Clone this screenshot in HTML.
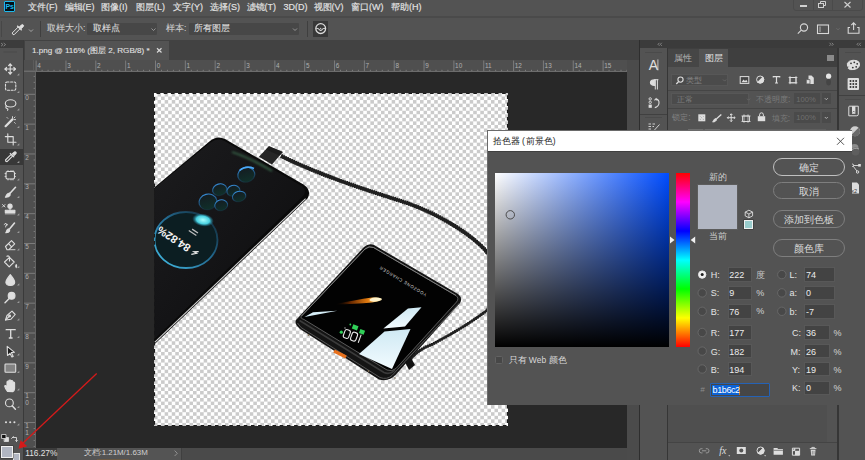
<!DOCTYPE html>
<html><head><meta charset="utf-8">
<style>
*{margin:0;padding:0;box-sizing:border-box}
html,body{width:865px;height:460px;overflow:hidden;background:#535353;font-family:"Liberation Sans",sans-serif;color:#d8d8d8}
.a{position:absolute}
.t{position:absolute;white-space:nowrap;line-height:1}
svg{position:absolute;overflow:visible}
</style></head><body>
<!-- MENU BAR -->
<div class="a" style="left:0;top:0;width:865px;height:17px;background:#535353"></div>
<div class="a" style="left:0;top:16px;width:865px;height:2px;background:#4a4a4a"></div>
<!-- OPTIONS BAR -->
<div class="a" style="left:0;top:18px;width:865px;height:22px;background:#535353"></div>
<!-- TAB BAR -->
<div class="a" style="left:0;top:40px;width:865px;height:20px;background:#424242"></div>

<!-- PS LOGO -->
<div class="a" style="left:3.6px;top:0.8px;width:11.6px;height:11px;background:#021018;border:1.1px solid #1cb8ec;border-radius:1px"></div>
<div class="t" style="left:5.6px;top:2.9px;font-size:7px;font-weight:bold;color:#1cb8ec;letter-spacing:-0.2px">Ps</div>
<!-- MENU ITEMS -->
<div class="t" style="left:28px;top:3.2px;font-size:9px;color:#e4e4e4;-webkit-text-stroke:0.15px #e4e4e4">文件(F)</div>
<div class="t" style="left:64.5px;top:3.2px;font-size:9px;color:#e4e4e4;-webkit-text-stroke:0.15px #e4e4e4">编辑(E)</div>
<div class="t" style="left:101px;top:3.2px;font-size:9px;color:#e4e4e4;-webkit-text-stroke:0.15px #e4e4e4">图像(I)</div>
<div class="t" style="left:136px;top:3.2px;font-size:9px;color:#e4e4e4;-webkit-text-stroke:0.15px #e4e4e4">图层(L)</div>
<div class="t" style="left:173px;top:3.2px;font-size:9px;color:#e4e4e4;-webkit-text-stroke:0.15px #e4e4e4">文字(Y)</div>
<div class="t" style="left:210px;top:3.2px;font-size:9px;color:#e4e4e4;-webkit-text-stroke:0.15px #e4e4e4">选择(S)</div>
<div class="t" style="left:246.5px;top:3.2px;font-size:9px;color:#e4e4e4;-webkit-text-stroke:0.15px #e4e4e4">滤镜(T)</div>
<div class="t" style="left:283.5px;top:3.2px;font-size:9px;color:#e4e4e4;-webkit-text-stroke:0.15px #e4e4e4">3D(D)</div>
<div class="t" style="left:313.5px;top:3.2px;font-size:9px;color:#e4e4e4;-webkit-text-stroke:0.15px #e4e4e4">视图(V)</div>
<div class="t" style="left:351px;top:3.2px;font-size:9px;color:#e4e4e4;-webkit-text-stroke:0.15px #e4e4e4">窗口(W)</div>
<div class="t" style="left:391px;top:3.2px;font-size:9px;color:#e4e4e4;-webkit-text-stroke:0.15px #e4e4e4">帮助(H)</div>
<!-- WINDOW CONTROLS -->
<div class="a" style="left:793px;top:-3px;width:70px;height:14px;border:1px solid #4a4a4a;border-radius:3px"></div>
<div class="a" style="left:813px;top:0;width:1px;height:10px;background:#4a4a4a"></div>
<div class="a" style="left:832px;top:0;width:1px;height:10px;background:#4a4a4a"></div>
<div class="a" style="left:799.5px;top:5px;width:7.5px;height:2px;background:#d0d0d0"></div>
<svg style="left:0;top:0" width="865" height="20"><g fill="none" stroke="#d0d0d0" stroke-width="1">
<rect x="818.5" y="3.5" width="5" height="4"/><path d="M820.5 3.5V1.5H825.5V5.5H823.5"/>
<path d="M844.5 2L850.5 7.5M850.5 2L844.5 7.5" stroke-width="1.1"/></g></svg>
<!-- OPTIONS BAR -->
<div class="a" style="left:1px;top:21px;width:1px;height:16px;background:#474747"></div>
<svg style="left:0;top:0" width="865" height="40"><g fill="none" stroke="#e0e0e0" stroke-width="1.1">
<path d="M12.8 34.3L12.2 33L18.3 26.9L20.1 28.7L14 34.8Z" stroke-width="1"/>
<path d="M17.2 25.8L21.7 30.3" stroke-width="1.3"/>
<path d="M19.3 27L21.3 25Q22.3 24 23.2 24.9Q24.1 25.8 23.1 26.8L21.1 28.8Z" fill="#e0e0e0" stroke-width="0.9"/>
<path d="M29 29.5L31 31.5L33 29.5" stroke="#b8b8b8" stroke-width="0.8"/>
</g></svg>
<div class="a" style="left:39.5px;top:21px;width:1px;height:16px;background:#3f3f3f"></div>
<div class="t" style="left:47px;top:24.3px;font-size:8.6px;color:#cdcdcd;-webkit-text-stroke:0.1px #cdcdcd">取样大小:</div>
<div class="a" style="left:87px;top:23px;width:70px;height:11.5px;background:#474747;border-radius:1px"></div>
<div class="t" style="left:93px;top:24.3px;font-size:8.6px;color:#dedede;-webkit-text-stroke:0.1px #dedede">取样点</div>
<div class="t" style="left:166px;top:24.3px;font-size:8.6px;color:#cdcdcd;-webkit-text-stroke:0.1px #cdcdcd">样本:</div>
<div class="a" style="left:189px;top:23px;width:110px;height:11.5px;background:#474747;border-radius:1px"></div>
<div class="t" style="left:194px;top:24.3px;font-size:8.6px;color:#dedede;-webkit-text-stroke:0.1px #dedede">所有图层</div>
<svg style="left:0;top:0" width="865" height="40"><g fill="none" stroke="#a8a8a8" stroke-width="0.8">
<path d="M151.5 28.5L153.5 30.5L155.5 28.5"/><path d="M293 28.5L295 30.5L297 28.5"/></g></svg>
<div class="a" style="left:307px;top:21px;width:1px;height:16px;background:#3f3f3f"></div>
<div class="a" style="left:313.2px;top:21px;width:15.3px;height:15.5px;background:#383838"></div>
<svg style="left:0;top:0" width="865" height="40"><g fill="none" stroke="#dcdcdc" stroke-width="1.3">
<circle cx="320.7" cy="28.6" r="4.9"/><path d="M316.2 28.2Q318.5 28.2 319.6 29.8Q320.7 31 321.8 29.8Q322.9 28.2 325.2 28.2" stroke-width="1.1"/><circle cx="320.7" cy="28.4" r="0.6" fill="#dcdcdc" stroke="none"/></g></svg>
<!-- RIGHT OPTIONS ICONS -->
<svg style="left:0;top:0" width="865" height="40"><g fill="none" stroke="#d8d8d8" stroke-width="1.1">
<circle cx="804" cy="27.5" r="3.6"/><path d="M801.3 30.2L797.8 33.6"/>
<rect x="817.5" y="25" width="11" height="8.5"/><path d="M820 26.5V32" stroke-width="1.4" stroke="#9a9a9a"/>
<path d="M836.5 28.3L838 29.8L839.5 28.3" stroke="#777" stroke-width="0.7"/>
<path d="M850 27.5H848.2V33.3H859V27.5H857.2"/><path d="M853.6 30V23M851.3 25.2L853.6 22.8L855.9 25.2"/>
</g></svg>
<!-- LEFT TOOLBAR -->
<div class="a" style="left:0;top:40px;width:24px;height:420px;background:#535353"></div>
<div class="a" style="left:0;top:40px;width:24px;height:8px;background:#3c3c3c"></div>
<div class="a" style="left:23px;top:40px;width:1px;height:420px;background:#3a3a3a"></div>
<!-- TOOL ICONS -->
<div class="a" style="left:0;top:149px;width:23px;height:15.6px;background:#383838"></div>
<svg style="left:0;top:0" width="24" height="460">
<g fill="none" stroke="#dcdcdc" stroke-width="0.8"><path d="M1 43L3 44.6L1 46.2M3.6 43L5.6 44.6L3.6 46.2" stroke="#9a9a9a" stroke-width="0.7"/></g>
<path d="M3.5 52H17" stroke="#4a4a4a" stroke-width="1"/>
<g fill="#9a9a9a">
<path d="M19.3 73.2V75.5H17Z"/><path d="M19.3 90.7V93H17Z"/><path d="M19.3 108.2V110.5H17Z"/><path d="M19.3 125.7V128H17Z"/><path d="M19.3 143.2V145.5H17Z"/><path d="M19.3 160.7V163H17Z"/><path d="M19.3 178.2V180.5H17Z"/><path d="M19.3 195.7V198H17Z"/><path d="M19.3 213.2V215.5H17Z"/><path d="M19.3 230.7V233H17Z"/><path d="M19.3 248.2V250.5H17Z"/><path d="M19.3 265.7V268H17Z"/><path d="M19.3 283.2V285.5H17Z"/><path d="M19.3 300.7V303H17Z"/><path d="M19.3 318.2V320.5H17Z"/><path d="M19.3 335.7V338H17Z"/><path d="M19.3 353.2V355.5H17Z"/><path d="M19.3 370.7V373H17Z"/><path d="M19.3 388.2V390.5H17Z"/><path d="M19.3 405.7V408H17Z"/><path d="M19.3 423.2V425.5H17Z"/>
</g>
<g fill="none" stroke="#dedede" stroke-width="1.1" stroke-linecap="round" stroke-linejoin="round">
<!-- move -->
<path d="M10.2 64V74M5 69H15.4"/>
<path d="M8.6 65.6L10.2 64L11.8 65.6M8.6 72.4L10.2 74L11.8 72.4M6.6 67.4L5 69L6.6 70.6M13.8 67.4L15.4 69L13.8 70.6" fill="#dedede"/>
<!-- marquee -->
<rect x="5.5" y="82" width="10.3" height="8.3" rx="1.5" stroke-dasharray="2 1.6"/>
<!-- lasso -->
<ellipse cx="10.6" cy="103.4" rx="5.3" ry="3.6"/>
<path d="M6.5 105.5Q5 108 7 108.5Q8.5 109 7.6 110.3"/>
<!-- magic wand -->
<path d="M5.6 126.2L12.4 119.4" stroke-width="2.2"/>
<path d="M12.5 116.6V118.2M15.6 119.6H14M15 117L14 118M7 117.5L7.8 118.3M14.5 122.5L15.3 123.3" stroke-width="0.9"/>
<!-- crop -->
<path d="M7.8 133.8V142.2H16M5.3 136.6H13.2V145"/>
<!-- eyedropper -->
<path d="M6 161.5L5.5 160L11.2 154.3L12.8 155.9L7.1 161.6Z"/>
<path d="M10.2 153.3L13.8 156.9"/>
<path d="M12.3 154L14 152.3Q15 151.3 15.8 152.1Q16.6 152.9 15.6 153.9L13.9 155.6" fill="#dedede"/>
<!-- healing chip -->
<rect x="6" y="171.5" width="8.5" height="7.5" rx="1.5" fill="none"/>
<path d="M5 173.5H6M5 176.5H6M14.5 173.5H15.5M14.5 176.5H15.5M8 170.5V171.5M11 170.5V171.5M8 179V180M11 179V180M13 170.5V171.5M13 179V180" stroke-width="0.8"/>
<!-- brush -->
<path d="M15.5 187.3L10 193.2" stroke-width="1.6"/>
<path d="M9.4 193Q7 193.5 6.4 195.2Q6 196.8 5.4 197.2Q8.8 197.4 10 195.4Q10.6 194.2 9.4 193Z" fill="#dedede"/>
<!-- stamp -->
<path d="M2.5 204.5L5 207M5 204.5L2.5 207" stroke-width="0.9"/>
<circle cx="10" cy="206.2" r="2.1" fill="#dedede"/>
<path d="M10 208.3V210.3"/>
<rect x="5.3" y="210.3" width="9.6" height="2.2" fill="#dedede"/>
<path d="M5.3 213.8H14.9" stroke-width="0.9"/>
<!-- history brush -->
<path d="M14.5 223L9.5 229" stroke-width="1.6"/>
<path d="M9 228.8Q7 229.2 6.6 230.8Q6.3 232.4 5.8 232.8Q8.8 232.9 9.6 231Q10 230 9 228.8Z" fill="#dedede"/>
<path d="M5.5 227Q5 225 7.5 224.3M4.2 224.5L6 223.2L6.8 225.5" stroke-width="0.9"/>
<!-- eraser -->
<path d="M5.5 246.5L11.5 240.6L14.7 243.8L8.9 249.7L7 249.7Z"/>
<path d="M8.5 243.6L11.6 246.8" />
<path d="M9.5 249.7H15" stroke-width="0.9"/>
<!-- bucket -->
<path d="M4.5 262L9.5 257.3L14.2 262L9.2 266.8Z"/>
<path d="M7 256.3Q8.5 255.2 9.5 257.3M9.5 257.3V261"/>
<path d="M16.2 264.5Q17.4 266.3 16.2 267.6Q15 266.3 16.2 264.5Z" fill="#dedede"/>
<!-- blur drop -->
<path d="M10.3 274.7Q14.7 280 14.7 282.3Q14.7 285.4 10.3 285.4Q5.9 285.4 5.9 282.3Q5.9 280 10.3 274.7Z" fill="#dedede"/>
<!-- dodge -->
<circle cx="11.6" cy="295.8" r="3.4" fill="#dedede"/>
<path d="M9.2 298.4L5 302.8" stroke-width="1.4"/>
<!-- pen -->
<path d="M5.5 320L7 315.5L12 311.2L15.2 314.5L11 319.2Z"/>
<path d="M5.5 320L9 316.6"/><circle cx="9.6" cy="316" r="0.9" fill="#dedede"/>
<!-- T -->
<path d="M6.2 330.2V329.6H15.2V330.2M10.7 329.6V338M8.8 338H12.6" stroke-width="1.3" stroke-linecap="butt"/>
<!-- path select -->
<path d="M7.2 346.3L14.5 352.3L11.3 352.6L13.2 356.4L11.9 357L10 353.3L7.5 355.5Z" fill="#1e1e1e" stroke="#dedede"/>
<!-- rectangle -->
<rect x="5" y="364" width="10.7" height="8.2" rx="0.8" fill="#dedede" fill-opacity="0.35"/>
<!-- hand -->
<path d="M7.5 391.5Q5.5 389 4.8 386.5Q4.6 385.4 5.7 385.6L7 387.2V382Q7 381 8 381Q8.9 381 8.9 382V380.8Q8.9 380 9.9 380Q10.9 380 10.9 380.8V381.3Q11 380.5 11.9 380.5Q12.8 380.6 12.8 381.5V383Q12.9 382 13.7 382.1Q14.6 382.2 14.6 383.1V388.5Q14.5 390.5 13 391.6Z" fill="#dedede"/>
<!-- zoom -->
<circle cx="9.4" cy="402.9" r="3.9"/>
<path d="M12.2 405.8L15.4 409.2" stroke-width="1.5"/>
<!-- dots -->
<g fill="#dedede" stroke="none"><circle cx="6" cy="422.2" r="1.05"/><circle cx="10.2" cy="422.2" r="1.05"/><circle cx="14.4" cy="422.2" r="1.05"/></g>
<!-- default colors -->
<rect x="4.5" y="437.5" width="4" height="4" fill="#dedede" stroke-width="0.8"/>
<rect x="2" y="434.5" width="4" height="4" fill="#111" stroke="#dedede" stroke-width="0.8"/>
<!-- swap -->
<path d="M12.5 437.5H16.5V441.5M11.6 438.5L12.5 437.5L13.4 436.5M15.6 440.6L16.5 441.5L17.4 440.6" stroke-width="0.9"/>
</g>
</svg>
<div class="a" style="left:13.3px;top:452.6px;width:7px;height:8px;background:#b1b6c2;border:1px solid #e8e8e8"></div>
<div class="a" style="left:0.9px;top:446.2px;width:12px;height:12px;background:#b1b6c2;border:1px solid #f0f0f0;box-shadow:0 0 0 0.5px #333"></div>
<!-- DOC TAB -->
<div class="a" style="left:25px;top:41px;width:144px;height:19px;background:#535353"></div>
<!-- TAB -->
<div class="t" style="left:32px;top:47px;font-size:8.1px;color:#e2e2e2;-webkit-text-stroke:0.1px #e2e2e2">1.png @ 116% (图层 2, RGB/8) *</div>
<svg style="left:0;top:0" width="865" height="60"><g stroke="#d8d8d8" stroke-width="1.2"><path d="M157 48.3L161.5 52.5M161.5 48.3L157 52.5"/></g></svg>

<!-- RULERS -->
<div class="a" style="left:24px;top:60px;width:613px;height:12px;background:#4f4f4f"></div>
<div class="a" style="left:24px;top:60px;width:12px;height:388px;background:#4f4f4f"></div>
<svg style="left:0;top:0" width="865" height="460"><g stroke-width="1" fill="none">
<path d="M36.14 60.5V71.5 M42.11 69.8V71.5 M48.08 69.8V71.5 M54.04 69.8V71.5 M60.01 69.8V71.5 M65.98 60.5V71.5 M71.95 69.8V71.5 M77.92 69.8V71.5 M83.88 69.8V71.5 M89.85 69.8V71.5 M95.82 60.5V71.5 M101.79 69.8V71.5 M107.76 69.8V71.5 M113.72 69.8V71.5 M119.69 69.8V71.5 M125.66 60.5V71.5 M131.63 69.8V71.5 M137.60 69.8V71.5 M143.56 69.8V71.5 M149.53 69.8V71.5 M155.50 60.5V71.5 M161.47 69.8V71.5 M167.44 69.8V71.5 M173.40 69.8V71.5 M179.37 69.8V71.5 M185.34 60.5V71.5 M191.31 69.8V71.5 M197.28 69.8V71.5 M203.24 69.8V71.5 M209.21 69.8V71.5 M215.18 60.5V71.5 M221.15 69.8V71.5 M227.12 69.8V71.5 M233.08 69.8V71.5 M239.05 69.8V71.5 M245.02 60.5V71.5 M250.99 69.8V71.5 M256.96 69.8V71.5 M262.92 69.8V71.5 M268.89 69.8V71.5 M274.86 60.5V71.5 M280.83 69.8V71.5 M286.80 69.8V71.5 M292.76 69.8V71.5 M298.73 69.8V71.5 M304.70 60.5V71.5 M310.67 69.8V71.5 M316.64 69.8V71.5 M322.60 69.8V71.5 M328.57 69.8V71.5 M334.54 60.5V71.5 M340.51 69.8V71.5 M346.48 69.8V71.5 M352.44 69.8V71.5 M358.41 69.8V71.5 M364.38 60.5V71.5 M370.35 69.8V71.5 M376.32 69.8V71.5 M382.28 69.8V71.5 M388.25 69.8V71.5 M394.22 60.5V71.5 M400.19 69.8V71.5 M406.16 69.8V71.5 M412.12 69.8V71.5 M418.09 69.8V71.5 M424.06 60.5V71.5 M430.03 69.8V71.5 M436.00 69.8V71.5 M441.96 69.8V71.5 M447.93 69.8V71.5 M453.90 60.5V71.5 M459.87 69.8V71.5 M465.84 69.8V71.5 M471.80 69.8V71.5 M477.77 69.8V71.5 M483.74 60.5V71.5 M489.71 69.8V71.5 M495.68 69.8V71.5 M501.64 69.8V71.5 M507.61 69.8V71.5 M513.58 60.5V71.5 M519.55 69.8V71.5 M525.52 69.8V71.5 M531.48 69.8V71.5 M537.45 69.8V71.5 M543.42 60.5V71.5 M549.39 69.8V71.5 M555.36 69.8V71.5 M561.32 69.8V71.5 M567.29 69.8V71.5 M573.26 60.5V71.5 M579.23 69.8V71.5 M585.20 69.8V71.5 M591.16 69.8V71.5 M597.13 69.8V71.5 M603.10 60.5V71.5 M609.07 69.8V71.5 M615.04 69.8V71.5 M621.00 69.8V71.5 M626.97 69.8V71.5" stroke="#7c7c7c"/>
<path d="M24 71.5H627" stroke="#6c6c6c"/>
<path d="M33.6 76.40H35.5 M33.6 82.36H35.5 M33.6 88.33H35.5 M24 94.30H35.5 M33.6 100.27H35.5 M33.6 106.24H35.5 M33.6 112.20H35.5 M33.6 118.17H35.5 M24 124.14H35.5 M33.6 130.11H35.5 M33.6 136.08H35.5 M33.6 142.04H35.5 M33.6 148.01H35.5 M24 153.98H35.5 M33.6 159.95H35.5 M33.6 165.92H35.5 M33.6 171.88H35.5 M33.6 177.85H35.5 M24 183.82H35.5 M33.6 189.79H35.5 M33.6 195.76H35.5 M33.6 201.72H35.5 M33.6 207.69H35.5 M24 213.66H35.5 M33.6 219.63H35.5 M33.6 225.60H35.5 M33.6 231.56H35.5 M33.6 237.53H35.5 M24 243.50H35.5 M33.6 249.47H35.5 M33.6 255.44H35.5 M33.6 261.40H35.5 M33.6 267.37H35.5 M24 273.34H35.5 M33.6 279.31H35.5 M33.6 285.28H35.5 M33.6 291.24H35.5 M33.6 297.21H35.5 M24 303.18H35.5 M33.6 309.15H35.5 M33.6 315.12H35.5 M33.6 321.08H35.5 M33.6 327.05H35.5 M24 333.02H35.5 M33.6 338.99H35.5 M33.6 344.96H35.5 M33.6 350.92H35.5 M33.6 356.89H35.5 M24 362.86H35.5 M33.6 368.83H35.5 M33.6 374.80H35.5 M33.6 380.76H35.5 M33.6 386.73H35.5 M24 392.70H35.5 M33.6 398.67H35.5 M33.6 404.64H35.5 M33.6 410.60H35.5 M33.6 416.57H35.5 M24 422.54H35.5 M33.6 428.51H35.5 M33.6 434.48H35.5 M33.6 440.44H35.5 M33.6 446.41H35.5" stroke="#7c7c7c"/>
<path d="M35.5 72V448" stroke="#626262"/>
<path d="M33.5 60V71M24 70.5H35" stroke="#5c5c5c"/>
</g></svg>
<div class="t" style="left:37.3px;top:63.3px;font-size:6.4px;color:#b0b0b0">4</div>
<div class="t" style="left:67.2px;top:63.3px;font-size:6.4px;color:#b0b0b0">3</div>
<div class="t" style="left:97.0px;top:63.3px;font-size:6.4px;color:#b0b0b0">2</div>
<div class="t" style="left:126.9px;top:63.3px;font-size:6.4px;color:#b0b0b0">1</div>
<div class="t" style="left:156.7px;top:63.3px;font-size:6.4px;color:#b0b0b0">0</div>
<div class="t" style="left:186.5px;top:63.3px;font-size:6.4px;color:#b0b0b0">1</div>
<div class="t" style="left:216.4px;top:63.3px;font-size:6.4px;color:#b0b0b0">2</div>
<div class="t" style="left:246.2px;top:63.3px;font-size:6.4px;color:#b0b0b0">3</div>
<div class="t" style="left:276.1px;top:63.3px;font-size:6.4px;color:#b0b0b0">4</div>
<div class="t" style="left:305.9px;top:63.3px;font-size:6.4px;color:#b0b0b0">5</div>
<div class="t" style="left:335.7px;top:63.3px;font-size:6.4px;color:#b0b0b0">6</div>
<div class="t" style="left:365.6px;top:63.3px;font-size:6.4px;color:#b0b0b0">7</div>
<div class="t" style="left:395.4px;top:63.3px;font-size:6.4px;color:#b0b0b0">8</div>
<div class="t" style="left:425.3px;top:63.3px;font-size:6.4px;color:#b0b0b0">9</div>
<div class="t" style="left:455.1px;top:63.3px;font-size:6.4px;color:#b0b0b0">10</div>
<div class="t" style="left:484.9px;top:63.3px;font-size:6.4px;color:#b0b0b0">11</div>
<div class="t" style="left:514.8px;top:63.3px;font-size:6.4px;color:#b0b0b0">12</div>
<div class="t" style="left:544.6px;top:63.3px;font-size:6.4px;color:#b0b0b0">13</div>
<div class="t" style="left:574.5px;top:63.3px;font-size:6.4px;color:#b0b0b0">14</div>
<div class="t" style="left:604.3px;top:63.3px;font-size:6.4px;color:#b0b0b0">15</div>
<div class="t" style="left:25.2px;top:94.9px;font-size:6.4px;color:#b0b0b0">0</div>
<div class="t" style="left:25.2px;top:124.7px;font-size:6.4px;color:#b0b0b0">1</div>
<div class="t" style="left:25.2px;top:154.6px;font-size:6.4px;color:#b0b0b0">2</div>
<div class="t" style="left:25.2px;top:184.4px;font-size:6.4px;color:#b0b0b0">3</div>
<div class="t" style="left:25.2px;top:214.3px;font-size:6.4px;color:#b0b0b0">4</div>
<div class="t" style="left:25.2px;top:244.1px;font-size:6.4px;color:#b0b0b0">5</div>
<div class="t" style="left:25.2px;top:273.9px;font-size:6.4px;color:#b0b0b0">6</div>
<div class="t" style="left:25.2px;top:303.8px;font-size:6.4px;color:#b0b0b0">7</div>
<div class="t" style="left:25.2px;top:333.6px;font-size:6.4px;color:#b0b0b0">8</div>
<div class="t" style="left:25.2px;top:363.5px;font-size:6.4px;color:#b0b0b0">9</div>
<div class="t" style="left:25.2px;top:393.3px;font-size:6.4px;color:#b0b0b0">1</div>
<div class="t" style="left:25.2px;top:399.8px;font-size:6.4px;color:#b0b0b0">0</div>
<div class="t" style="left:25.2px;top:423.1px;font-size:6.4px;color:#b0b0b0">1</div>
<div class="t" style="left:25.2px;top:429.6px;font-size:6.4px;color:#b0b0b0">1</div>
<!-- CANVAS -->
<div class="a" style="left:36px;top:72px;width:601px;height:376px;background:#282828"></div>
<!-- STATUS BAR -->
<div class="a" style="left:24px;top:448.3px;width:614px;height:11.7px;background:#4a4a4a"></div>
<div class="a" style="left:23.5px;top:448.3px;width:33px;height:11.7px;background:#3c3c3c"></div>
<div class="a" style="left:56.5px;top:448.3px;width:124.8px;height:11.7px;background:#545454"></div>
<div class="a" style="left:181.3px;top:448.3px;width:1px;height:11.7px;background:#404040"></div>
<div class="a" style="left:97px;top:459px;width:32px;height:1px;background:#6b5a45"></div>
<div class="t" style="left:25.2px;top:449.4px;font-size:8.3px;color:#e2e2e2">116.27%</div>
<div class="t" style="left:83.5px;top:449.4px;font-size:7.9px;color:#d0d0d0">文档:1.21M/1.63M</div>
<svg style="left:0;top:0" width="865" height="460"><path d="M174.6 450.6L177.3 453.3L174.6 456" fill="none" stroke="#a0a0a0" stroke-width="0.8"/></svg>
<!-- PANEL GAP -->
<div class="a" style="left:627px;top:60px;width:11.5px;height:400px;background:#4b4b4b"></div>
<div class="a" style="left:638.5px;top:40px;width:1.5px;height:420px;background:#2e2e2e"></div>
<!-- DOCK 1 -->
<div class="a" style="left:640px;top:40px;width:26.5px;height:420px;background:#535353"></div>
<div class="a" style="left:640px;top:40px;width:225px;height:8.3px;background:#3b3b3b"></div>
<div class="a" style="left:666.5px;top:48px;width:1.5px;height:412px;background:#363636"></div>
<div class="a" style="left:645px;top:52.3px;width:17px;height:1px;background:#4a4a4a"></div>
<div class="a" style="left:640px;top:113.5px;width:26.5px;height:1px;background:#404040"></div>
<div class="a" style="left:645px;top:117px;width:17px;height:1px;background:#4a4a4a"></div>
<svg style="left:0;top:0" width="865" height="460">
<g fill="none" stroke="#a0a0a0" stroke-width="0.7"><path d="M659.5 42.8L658 44.3L659.5 45.8M661.8 42.8L660.3 44.3L661.8 45.8"/>
<path d="M829.5 42.8L831 44.3L829.5 45.8M831.8 42.8L833.3 44.3L831.8 45.8"/>
<path d="M858.5 42.8L857 44.3L858.5 45.8M860.8 42.8L859.3 44.3L860.8 45.8"/></g>
<g fill="none" stroke="#dedede" stroke-width="1.1">
<text x="648.8" y="70.2" font-family="Liberation Sans" font-size="14" fill="#e0e0e0" stroke="none">A</text><path d="M657.9 59.4V70.4" stroke-width="0.8"/>
<path d="M654.3 79.7H658.4M655.3 79.7V89.5M657.4 79.7V89.5" stroke-width="1"/>
<path d="M654.8 79.7Q650.4 79.7 650.4 82.6Q650.4 85.4 654.8 85.4Z" fill="#dedede"/>
<circle cx="650.2" cy="98.9" r="1.2" stroke-width="0.9"/><circle cx="650.2" cy="102.3" r="1.2" stroke-width="0.9"/>
<rect x="648.6" y="104.6" width="3.2" height="3.2" fill="#dedede" stroke="none"/>
<path d="M654.5 100.3L656.1 98.6L657.2 100.5M656.1 98.8Q659.3 99.8 659 103.2Q658.6 106.6 654.8 107.6"/>
<path d="M648.5 124H651M648.5 126.5H651M648.5 129H651M652.5 124H655M652.5 126.5H654M659.5 124.5L654.5 130" stroke-width="0.9"/>
</g>
</svg>
<!-- LAYERS PANEL -->
<div class="a" style="left:668px;top:48px;width:169px;height:412px;background:#535353"></div>
<div class="a" style="left:668px;top:48px;width:169px;height:19.3px;background:#3f3f3f"></div><div class="a" style="left:668px;top:48.8px;width:31px;height:18.5px;background:#464646"></div>
<div class="a" style="left:699px;top:48.8px;width:29.3px;height:18.5px;background:#535353"></div>
<div class="t" style="left:674px;top:54px;font-size:9px;color:#b4b4b4">属性</div>
<div class="t" style="left:704.6px;top:54px;font-size:9px;color:#e2e2e2">图层</div>
<div class="a" style="left:827px;top:55.3px;width:7px;height:5.5px;background:#8a8a8a"></div>
<div class="a" style="left:670.7px;top:73.7px;width:57.6px;height:12.5px;background:#4b4b4b;border:1px solid #575757"></div>
<div class="t" style="left:685.8px;top:75.6px;font-size:8.4px;color:#858585">类型</div>
<div class="a" style="left:668px;top:90px;width:169px;height:1px;background:#454545"></div>
<div class="a" style="left:670.7px;top:93.2px;width:78.4px;height:12.3px;background:#4b4b4b;border:1px solid #575757"></div>
<div class="t" style="left:676.7px;top:95px;font-size:8.4px;color:#7e7e7e">正常</div>
<div class="t" style="left:756px;top:95px;font-size:8.4px;color:#7a7a7a">不透明度:</div>
<div class="a" style="left:794px;top:93.4px;width:26px;height:11px;background:#4a4a4a"></div>
<div class="t" style="left:796.3px;top:95.5px;font-size:7.6px;color:#707070">100%</div>
<div class="a" style="left:821.6px;top:93.4px;width:9.2px;height:11px;background:#4a4a4a"></div>
<div class="a" style="left:668px;top:108.4px;width:169px;height:1px;background:#454545"></div>
<div class="t" style="left:672.2px;top:112.6px;font-size:8.4px;color:#828282">锁定:</div>
<div class="t" style="left:771.8px;top:114px;font-size:8.4px;color:#7a7a7a">填充:</div>
<div class="a" style="left:794px;top:112.3px;width:26px;height:11px;background:#4a4a4a"></div>
<div class="t" style="left:796.3px;top:114.3px;font-size:7.6px;color:#707070">100%</div>
<div class="a" style="left:821.6px;top:112.3px;width:9.2px;height:11px;background:#4a4a4a"></div>
<svg style="left:0;top:0" width="865" height="460">
<g fill="none" stroke="#a8a8a8" stroke-width="0.8"><path d="M723 79.5L724.6 81.1L726.2 79.5M747 98.7L748.5 100.2L750 98.7" stroke="#6a6a6a"/>
<path d="M824.8 98.2L826.3 99.7L827.8 98.2M824.8 117L826.3 118.5L827.8 117" stroke="#c8c8c8"/></g>
<g fill="none" stroke="#dedede" stroke-width="1">
<circle cx="680.5" cy="79.6" r="2.6" stroke-width="1.1"/><path d="M678.6 81.6L676.3 84" stroke-width="1.3"/>
<rect x="740.2" y="76.6" width="8.6" height="6.8" fill="#444"/><path d="M741.5 82.2L743.5 79.6L745 81L746.3 79.8L747.7 82.2Z" fill="#dedede" stroke="none"/>
<circle cx="760.2" cy="79.6" r="3.6"/><path d="M757.6 82.2L762.8 77Q764.5 79.6 762.8 82.2Q760.2 84 757.6 82.2Z" fill="#dedede"/>
<path d="M773.3 77.6V76.6H779.7V77.6M776.5 76.6V83M775 83H778" stroke-width="1.2"/>
<rect x="790" y="77.5" width="6" height="5.3"/><path d="M788.6 77.5H797.4M788.6 82.8H797.4M790 76.1V84.2M796 76.1V84.2" stroke-width="0.8"/>
<path d="M808.5 75.5H811.5L813.8 77.8V83.9H808.5Z" fill="#dedede" stroke="none"/><path d="M806.3 79.6H810V83.9H806.3Z" fill="#dedede" stroke="#535353" stroke-width="0.7"/>
<circle cx="828.6" cy="76.2" r="2.6" fill="#e6e6e6" stroke="none"/><rect x="826.2" y="79" width="4.8" height="6.4" rx="2.4" fill="#454545" stroke="none"/>
<rect x="698.3" y="114.3" width="7" height="7" fill="#dedede" stroke="none"/>
<g fill="#333"><rect x="699.6" y="115.5" width="1.4" height="1.4"/><rect x="702.6" y="115.5" width="1.4" height="1.4"/><rect x="701.1" y="117" width="1.4" height="1.4"/><rect x="699.6" y="118.6" width="1.4" height="1.4"/><rect x="702.6" y="118.6" width="1.4" height="1.4"/></g>
<path d="M721.3 114.6L716.3 119" stroke-width="1.3"/><path d="M715.8 118.6Q713.8 119.2 713.4 120.6Q713.2 121.6 712.6 122Q715.6 122 716.4 120.2Q716.8 119.4 715.8 118.6Z" fill="#dedede"/>
<path d="M731.2 113.8V121.6M727.3 117.7H735.1M730 115L731.2 113.8L732.4 115M730 120.4L731.2 121.6L732.4 120.4M728.5 116.5L727.3 117.7L728.5 118.9M733.9 116.5L735.1 117.7L733.9 118.9"/>
<path d="M742.5 116H749.5V121.5H742.5Z" stroke-width="0.9"/><path d="M741.4 116H750.6M741.4 121.5H750.6M744 114.3V122.8M748 114.3V122.8" stroke-width="0.7"/>
<path d="M759.6 116.2V114.8Q759.6 112.8 761.5 112.8Q763.4 112.8 763.4 114.8V116.2" stroke-width="1"/><rect x="757.8" y="116.2" width="7.4" height="5" fill="#dedede" stroke="none"/>
</g></svg>
<div class="a" style="left:688px;top:128.6px;width:138px;height:2.5px;background:#5e5e5e"></div><div class="a" style="left:688px;top:128.6px;width:15px;height:2.5px;background:#6e6e6e"></div><div class="a" style="left:705px;top:128.6px;width:15px;height:2.5px;background:#6e6e6e"></div>
<div class="a" style="left:668px;top:405px;width:158.5px;height:37.5px;background:#4f4f4f"></div>
<div class="a" style="left:826.5px;top:405px;width:10.5px;height:37.5px;background:#535353"></div>
<div class="a" style="left:668px;top:442px;width:169px;height:18px;background:#535353;border-top:1px solid #444"></div>
<svg style="left:0;top:0" width="865" height="460"><g fill="none" stroke="#9a9a9a" stroke-width="1">
<path d="M702.5 448.7H701.2Q699.3 448.7 699.3 450.8Q699.3 452.9 701.2 452.9H702.5M705.8 448.7H707.1Q709 448.7 709 450.8Q709 452.9 707.1 452.9H705.8M702 450.8H706.3"/></g>
<g fill="none" stroke="#dedede" stroke-width="1">
<text x="719.3" y="454.2" font-family="Liberation Serif" font-style="italic" font-size="10" fill="#dedede" stroke="none">fx</text>
<path d="M728.3 455.2H730.2L729.25 456.4Z" fill="#dedede" stroke="none"/>
<rect x="736.8" y="447" width="9" height="7" fill="#dedede" stroke="none"/><circle cx="741.3" cy="450.5" r="2" fill="#535353" stroke="none"/>
<circle cx="760.6" cy="450.6" r="3.6"/><path d="M758 453.2L763.2 448Q764.8 450.6 763.2 453.2Q760.6 455 758 453.2Z" fill="#dedede"/>
<path d="M764.2 455.2H766.1L765.15 456.4Z" fill="#dedede" stroke="none"/>
<path d="M773.6 448H777.2L778.2 449H782.9V454.8H773.6Z" fill="#dedede" stroke="none"/><path d="M773.6 450.3H782.9" stroke="#535353" stroke-width="0.7"/>
<path d="M792.4 448.2H799.6V455.2H792.4Z"/><path d="M794.8 448.2V450.6H792.4" fill="#dedede"/><rect x="795" y="450.8" width="4.6" height="4.4" fill="#dedede" stroke="none"/>
<path d="M809.8 448.6H816.4M811.8 448.6V447.4H814.4V448.6" stroke-width="0.9"/><path d="M810.7 449.7H815.5L815 455.6H811.2Z" fill="#dedede" stroke="none"/>
<path d="M812.3 450.8V454.6M814 450.8V454.6" stroke="#535353" stroke-width="0.6"/>
</g></svg>
<!-- RIGHT DOCK -->
<div class="a" style="left:837px;top:48px;width:1.6px;height:412px;background:#363636"></div>
<div class="a" style="left:839px;top:48px;width:26px;height:412px;background:#535353"></div>
<div class="a" style="left:845px;top:52.4px;width:16px;height:1px;background:#4a4a4a"></div>
<div class="a" style="left:839px;top:95px;width:26px;height:1px;background:#404040"></div>
<div class="a" style="left:845px;top:99px;width:16px;height:1px;background:#4a4a4a"></div>
<svg style="left:0;top:0" width="865" height="460"><g fill="none" stroke="#dedede" stroke-width="1">
<path d="M847.5 66.2Q846.2 62.8 849.5 61.2Q853 59.6 856.6 60.6Q860 61.8 859.5 65Q859 68.5 854 69.5Q850 70.2 848.3 68.5Q847.9 67.5 849.6 66.8Q851 66 847.5 66.2Z" fill="#dedede"/>
<g fill="#333" stroke="none"><circle cx="851" cy="63.3" r="0.9"/><circle cx="854.3" cy="62.3" r="0.9"/><circle cx="857.2" cy="63.8" r="0.9"/><circle cx="856.2" cy="66.8" r="0.9"/><circle cx="852.8" cy="67.6" r="0.9"/></g>
<rect x="847.6" y="78" width="11.4" height="12" rx="1" fill="#dedede" stroke="none"/>
<g fill="#333" stroke="none"><circle cx="850.5" cy="81" r="1"/><circle cx="853.3" cy="81" r="1"/><circle cx="856.1" cy="81" r="1"/><circle cx="850.5" cy="84" r="1"/><circle cx="853.3" cy="84" r="1"/><circle cx="856.1" cy="84" r="1"/><circle cx="850.5" cy="87" r="1"/><circle cx="853.3" cy="87" r="1"/><circle cx="856.1" cy="87" r="1"/></g>
<path d="M848.8 107V115.8H856.8Q858.3 115.8 858.3 114.2V106.2H849.6Q848.8 106.2 848.8 107Z"/>
<path d="M852 106.2V113.8H855.4V106.2" fill="#dedede" stroke="none"/><path d="M852.6 112.3L853.7 111.2L854.8 112.3" stroke="#535353" stroke-width="0.8"/>
<circle cx="855" cy="131.2" r="5" fill="#cfcfcf" stroke="none"/><path d="M851.5 134.7L858.5 127.7Q860 129.2 860 131.2Q860 136.2 855 136.2Q853 136.2 851.5 134.7Z" fill="#6a6a6a" stroke="none"/>
<circle cx="854.5" cy="148" r="4" fill="#8c8c8c" stroke="none"/><circle cx="855.5" cy="151.6" r="4" fill="#5e5e5e" stroke="none"/><path d="M851.5 150.5Q854 147 859 149" stroke="#b8b8b8" stroke-width="0.8"/>
<path d="M852.5 165.5H859M853 166L857.3 171.5M859 166V166" stroke-width="0.9"/><circle cx="852.4" cy="165.3" r="1.2" fill="#535353"/><rect x="858.2" y="164" width="2.6" height="2.6" fill="#dedede" stroke="none"/><circle cx="857.6" cy="172" r="1.2" fill="#535353"/>
<path d="M852 182.6H857L859 184.6V193.4H852Z" fill="#dedede" stroke="none"/><text x="851.3" y="192.5" font-size="5.5" font-family="Liberation Sans" fill="#333" stroke="none">x2</text>
</g></svg>
<!-- IMAGE -->
<div class="a" style="left:154px;top:93px;width:354px;height:333px;overflow:hidden;background-color:#fff;background-image:repeating-conic-gradient(#cbcbcb 0 25%,#fff 0 50%);background-size:7.1px 7.1px">
<svg style="left:-154px;top:-93px" width="865" height="460">
<defs>
<linearGradient id="ph" x1="0" y1="0" x2="1" y2="1"><stop offset="0" stop-color="#1c1c1e"/><stop offset="0.5" stop-color="#141416"/><stop offset="1" stop-color="#0c0c0c"/></linearGradient>
<radialGradient id="sph" cx="0.5" cy="0.5" r="0.5"><stop offset="0" stop-color="#0d1f24"/><stop offset="0.75" stop-color="#0f2a33"/><stop offset="0.92" stop-color="#1d6a8a"/><stop offset="1" stop-color="#2a9ad0" stop-opacity="0.2"/></radialGradient>
<radialGradient id="bub" cx="0.5" cy="0.5" r="0.5"><stop offset="0" stop-color="#0f2622"/><stop offset="0.7" stop-color="#12302e"/><stop offset="0.88" stop-color="#1b5a80"/><stop offset="1" stop-color="#2f8fdc" stop-opacity="0.1"/></radialGradient>
<radialGradient id="hl" cx="0.5" cy="0.5" r="0.5"><stop offset="0" stop-color="#a8ffff"/><stop offset="0.6" stop-color="#48d0e0"/><stop offset="1" stop-color="#1a7a9a" stop-opacity="0"/></radialGradient>
<linearGradient id="refl" x1="0" y1="0" x2="0" y2="1"><stop offset="0" stop-color="#cfe9f3"/><stop offset="1" stop-color="#f2fbff"/></linearGradient>
<radialGradient id="str" cx="0.8" cy="0.5" r="0.6"><stop offset="0" stop-color="#fffbe8"/><stop offset="0.2" stop-color="#ffd070"/><stop offset="0.5" stop-color="#e07010"/><stop offset="0.8" stop-color="#702000" stop-opacity="0.6"/><stop offset="1" stop-color="#000" stop-opacity="0"/></radialGradient>
<filter id="blur1"><feGaussianBlur stdDeviation="1"/></filter><linearGradient id="rim" x1="0" y1="0" x2="1" y2="1"><stop offset="0" stop-color="#3fb0e8"/><stop offset="0.45" stop-color="#2a7ab0"/><stop offset="1" stop-color="#0d2424" stop-opacity="0.2"/></linearGradient><linearGradient id="rim2" x1="1" y1="0" x2="0" y2="1"><stop offset="0" stop-color="#1a5a80" stop-opacity="0.25"/><stop offset="0.45" stop-color="#2a8ac0" stop-opacity="0.7"/><stop offset="1" stop-color="#48c8f0"/></linearGradient><linearGradient id="str2" x1="0" y1="0" x2="1" y2="0"><stop offset="0" stop-color="#000" stop-opacity="0"/><stop offset="0.35" stop-color="#6a2a00"/><stop offset="0.7" stop-color="#e07a10"/><stop offset="0.9" stop-color="#ffd070"/><stop offset="1" stop-color="#fff4c8"/></linearGradient><linearGradient id="rimv" x1="0" y1="0" x2="0" y2="1"><stop offset="0" stop-color="#3a9cf0"/><stop offset="0.5" stop-color="#2670b0" stop-opacity="0.8"/><stop offset="1" stop-color="#1a4060" stop-opacity="0.3"/></linearGradient><linearGradient id="bubf" x1="0" y1="0" x2="0" y2="1"><stop offset="0" stop-color="#141c22"/><stop offset="1" stop-color="#10302a"/></linearGradient></defs>
<!-- cable -->
<path d="M281 156 C320 175 360 188 400 200.7 C430 210 462 228 480.4 245.2 C503 266 503 296 487 310.4" fill="none" stroke="#161616" stroke-width="4.2" stroke-dasharray="1.5 0.7"/><path d="M487 310.4 C472 322 450 335 432.6 344.1 C420 349 413 354 409 362" fill="none" stroke="#161616" stroke-width="3" stroke-dasharray="1.5 0.7"/>
<path d="M281 156 C320 175 360 188 400 200.7 C430 210 462 228 480.4 245.2 C503 266 503 296 487 310.4" fill="none" stroke="#202020" stroke-width="3.2"/><path d="M487 310.4 C472 322 450 335 432.6 344.1 C420 349 413 354 409 362" fill="none" stroke="#202020" stroke-width="2.2"/>
<!-- phone -->
<path d="M150 191 L210 141 Q217 135 225 139 L303.5 184.5 Q312 190.5 307.5 198.5 L150 348.6 Z" fill="#0a0a0a"/>
<path d="M150 192 L210.5 142.5 Q217 137.5 224.5 141 L301.5 186 Q307.5 190.5 303 196 L150 343.4 Z" fill="url(#ph)"/>
<path d="M305.6 198.6 L150 346.8" stroke="#d0d0d0" stroke-width="1.1" fill="none"/>
<path d="M232 152 Q250 158 272 171" stroke="#4f9a6a" stroke-width="1.6" fill="none" opacity="0.6" filter="url(#blur1)"/>
<!-- connector -->
<path d="M258.9 156.7 L268.9 146.3 L282.8 152 L272 164.6 Z" fill="#262626"/><path d="M266 149.5 L269 146.3 L282.8 152 L279.5 155.5 Z" fill="#1c1c1c"/>
<!-- bubbles -->
<g fill="url(#bubf)" stroke="url(#rimv)" stroke-width="1.1" stroke-opacity="0.85">
<ellipse cx="246.3" cy="174.8" rx="8.6" ry="7.4" transform="rotate(-15 246.3 174.8)"/>
<ellipse cx="219.7" cy="189.7" rx="7.2" ry="5.8" transform="rotate(-15 219.7 189.7)"/>
<ellipse cx="233.4" cy="190.8" rx="6.6" ry="5.4" transform="rotate(-15 233.4 190.8)"/>
<ellipse cx="239.1" cy="196.5" rx="6.8" ry="5.1" transform="rotate(-15 239.1 196.5)"/>
<ellipse cx="207.9" cy="201.9" rx="9" ry="7.8" transform="rotate(-15 207.9 201.9)"/>
<ellipse cx="221.2" cy="205.3" rx="6.5" ry="5.4" transform="rotate(-15 221.2 205.3)"/>
</g>
<path d="M239.5 170.5 Q246 165 254 168.5" stroke="#4aa8f8" stroke-width="1.6" fill="none"/>
<!-- big sphere -->
<ellipse cx="186" cy="240" rx="31.5" ry="28" fill="#0c1e22" stroke="url(#rim2)" stroke-width="1.8"/>
<ellipse cx="203" cy="220" rx="11" ry="6.5" fill="url(#hl)" transform="rotate(10 203 220)"/>
<text x="0" y="0" transform="translate(191.5 246) rotate(213)" font-size="11" font-family="Liberation Sans" fill="#f4f4f4" font-weight="bold">84.82%</text><g transform="translate(196 236) rotate(213)" fill="#bdbdbd"><rect x="0" y="0" width="9" height="1.3"/><rect x="0" y="3" width="7" height="1.3"/></g>
<path d="M197.5 250 L193.5 252.5 L196.5 252.5 L192.5 256" stroke="#eee" stroke-width="1.2" fill="none" transform="rotate(30 195 253)"/>
<!-- power bank -->
<path d="M296 320 L364 247 Q368.5 243 374 245 L458 294 Q463 298 460 303 L396 374.5 Q389 382 379 379.5 L300 329 Q294 324 296 320 Z" fill="#141414"/>
<path d="M297.5 323 L301 327.5 L380 377.5 Q387 380 392 375.5 L459.5 303" stroke="#555" stroke-width="1" fill="none"/><path d="M299.5 320.5 L384 372.5 Q390 375 395 370" stroke="#3a3a3a" stroke-width="1.6" fill="none"/>
<path d="M301.5 316 L365 249 Q369 245.5 373.5 247.5 L456 295.5 Q459.5 298.5 456.5 302 L396 368.5 Q392 372 387 370 L304 319.5 Q299.5 318 301.5 316 Z" fill="#020202" stroke="#5a5a5a" stroke-width="1"/>
<path d="M301.5 316 L365 249 Q369 245.5 373.5 247.5 L456 295.5" stroke="#8a8a8a" stroke-width="0.8" fill="none"/>
<path d="M383.4 328.4 L408 308.5 L421.5 307.2 L405 326.5 Z" fill="url(#refl)"/>
<path d="M359 354 L384.5 331.5 L410.5 329 L392 369 Z" fill="url(#refl)"/>
<path d="M304.5 317 L337.4 310.8 L313 312.3 Z" fill="#d6eef8"/>
<path d="M334 304.5 Q355 300 372 297.6 Q381 296.8 382 299 Q381.5 301.5 372 302.4 Q355 304 334 304.5Z" fill="url(#str2)"/><ellipse cx="375" cy="299.6" rx="5.5" ry="2" fill="#fff8d8" opacity="0.9" transform="rotate(-5 375 299.6)"/>
<g transform="translate(355 337) rotate(20)" fill="none" stroke="#e8e8e8" stroke-width="1.1">
<rect x="-11.5" y="-4.3" width="5.6" height="8.6" rx="2"/><rect x="-3.8" y="-4.3" width="5.6" height="8.6" rx="2"/><path d="M5 -4.3V4.3"/></g>
<rect x="352.5" y="325" width="5.5" height="4.5" fill="#30d058" transform="rotate(20 355 327)"/>
<rect x="359.5" y="329.8" width="5" height="4.3" fill="#30d058" transform="rotate(20 362 332)"/>
<circle cx="341.3" cy="332.2" r="1.6" fill="#30d058"/><circle cx="345" cy="328" r="0.9" fill="#666"/><circle cx="350.3" cy="324.5" r="0.9" fill="#30d058"/>
<path d="M334 351 L346 357" stroke="#e8701c" stroke-width="3.4"/>
<g fill="#7a6a50"><circle cx="308.5" cy="335" r="0.9"/><circle cx="368.5" cy="371" r="0.9"/><circle cx="395" cy="378" r="0.8"/></g>
<text x="0" y="0" transform="translate(427 294) rotate(211)" font-size="4.3" font-family="Liberation Sans" fill="#d4d4d4" letter-spacing="0.7">YOOZONE CHARGER</text>
<path d="M405 362 L411 358 L415 365 L409 370 Z" fill="#111"/>
</svg>
<svg style="left:0;top:0" width="354" height="333"><rect x="0.5" y="0.5" width="353" height="332" fill="none" stroke="#1a1a1a" stroke-width="1.2" stroke-dasharray="3.6 3.6" stroke-dashoffset="-2"/></svg>
</div>
<!-- DIALOG -->
<div class="a" style="left:487.1px;top:130.3px;width:365px;height:275.2px;background:#6a6a6a"></div>
<div class="a" style="left:488px;top:131px;width:363.5px;height:20px;background:#ffffff"></div>
<div class="a" style="left:488px;top:150.8px;width:363.5px;height:254.2px;background:#535353;border-top:1px solid #404040"></div>
<div class="t" style="left:492.5px;top:137px;font-size:8.5px;color:#1e1e1e">拾色器 <span style="letter-spacing:1px">(</span>前景色)</div>
<svg style="left:0;top:0" width="865" height="460"><path d="M837 137.8L844 144.8M844 137.8L837 144.8" stroke="#444" stroke-width="0.9" fill="none"/></svg>
<div class="a" style="left:494.5px;top:172.5px;width:174px;height:174px;background:linear-gradient(to top,#000,rgba(0,0,0,0)),linear-gradient(to right,#fff,#004cff)"></div>
<svg style="left:0;top:0" width="865" height="460"><circle cx="510.3" cy="214.8" r="4.2" fill="none" stroke="#4a4a4a" stroke-width="1"/></svg>
<div class="a" style="left:676px;top:172.5px;width:13.5px;height:174px;background:linear-gradient(to bottom,#f00 0%,#f0f 16.67%,#00f 33.33%,#0ff 50%,#0f0 66.67%,#ff0 83.33%,#f00 100%)"></div>
<svg style="left:0;top:0" width="865" height="460"><path d="M670 236.5L674.5 240L670 243.5Z M695.2 236.5L690.7 240L695.2 243.5Z" fill="#f0f0f0"/></svg>
<div class="a" style="left:494.5px;top:355.8px;width:8.2px;height:8.2px;background:#474747;border:1px solid #626262;border-radius:1.5px"></div>
<div class="t" style="left:508.5px;top:355.5px;font-size:8.5px;color:#d8d8d8">只有 Web 颜色</div>
<div class="t" style="left:708.8px;top:173.3px;font-size:8.8px;color:#d0d0d0">新的</div>
<div class="a" style="left:697.2px;top:183.7px;width:41.3px;height:46.7px;background:#b1b6c2;border:0.8px solid #5c5c5c"></div>
<div class="t" style="left:709px;top:231.6px;font-size:8.8px;color:#d0d0d0">当前</div>
<svg style="left:0;top:0" width="865" height="460"><g fill="none" stroke="#e0e0e0" stroke-width="0.9"><path d="M748.9 210.2L752.6 212.1V215.9L748.9 217.8L745.2 215.9V212.1Z M745.2 212.1L748.9 214L752.6 212.1 M748.9 214V217.8"/></g></svg>
<div class="a" style="left:744.3px;top:219.8px;width:9.2px;height:9.2px;background:#99cccc;border:1px solid #f0f0f0;box-shadow:0 0 0 0.5px #333"></div>
<div class="a" style="left:773px;top:158.3px;width:71.5px;height:17.6px;border:1.3px solid #c0c0c0;border-radius:9px"></div>
<div class="t" style="left:773px;width:71.5px;text-align:center;top:163.4px;font-size:9.6px;color:#dcdcdc">确定</div>
<div class="a" style="left:773px;top:182px;width:71.5px;height:17.3px;border:1px solid #7e7e7e;border-radius:9px"></div>
<div class="t" style="left:773px;width:71.5px;text-align:center;top:187.0px;font-size:9.6px;color:#dcdcdc">取消</div>
<div class="a" style="left:773px;top:210.2px;width:71.5px;height:17.5px;border:1px solid #7e7e7e;border-radius:9px"></div>
<div class="t" style="left:773px;width:71.5px;text-align:center;top:215.2px;font-size:9.6px;color:#dcdcdc">添加到色板</div>
<div class="a" style="left:773px;top:239.1px;width:71.5px;height:17.5px;border:1px solid #7e7e7e;border-radius:9px"></div>
<div class="t" style="left:773px;width:71.5px;text-align:center;top:244.2px;font-size:9.6px;color:#dcdcdc">颜色库</div>
<svg style="left:0;top:0" width="865" height="460"><circle cx="702.2" cy="274.6" r="3.7" fill="#f2f2f2" stroke="#e8e8e8" stroke-width="1"/><circle cx="702.2" cy="274.6" r="1.5" fill="#1e1e1e"/></svg>
<div class="t" style="left:710.8px;top:271.1px;font-size:9px;color:#e4e4e4">H:</div>
<div class="a" style="left:727.6px;top:267.3px;width:24.8px;height:14.6px;background:#434343;border:1px solid #585858"></div>
<div class="t" style="left:729.3px;top:271.1px;font-size:9px;color:#ececec">222</div>
<div class="t" style="left:756.2px;top:270.8px;font-size:9.3px;color:#c4c4c4">度</div>
<svg style="left:0;top:0" width="865" height="460"><circle cx="702.2" cy="292.9" r="4.2" fill="#484848" stroke="#6a6a6a" stroke-width="0.9"/></svg>
<div class="t" style="left:710.8px;top:289.4px;font-size:9px;color:#e4e4e4">S:</div>
<div class="a" style="left:727.6px;top:285.6px;width:24.8px;height:14.6px;background:#434343;border:1px solid #585858"></div>
<div class="t" style="left:729.3px;top:289.4px;font-size:9px;color:#ececec">9</div>
<div class="t" style="left:756.2px;top:289.0px;font-size:9px;color:#d4d4d4">%</div>
<svg style="left:0;top:0" width="865" height="460"><circle cx="702.2" cy="311.3" r="4.2" fill="#484848" stroke="#6a6a6a" stroke-width="0.9"/></svg>
<div class="t" style="left:710.8px;top:307.8px;font-size:9px;color:#e4e4e4">B:</div>
<div class="a" style="left:727.6px;top:304.0px;width:24.8px;height:14.6px;background:#434343;border:1px solid #585858"></div>
<div class="t" style="left:729.3px;top:307.8px;font-size:9px;color:#ececec">76</div>
<div class="t" style="left:756.2px;top:307.4px;font-size:9px;color:#d4d4d4">%</div>
<svg style="left:0;top:0" width="865" height="460"><circle cx="702.2" cy="332.5" r="4.2" fill="#484848" stroke="#6a6a6a" stroke-width="0.9"/></svg>
<div class="t" style="left:710.8px;top:329.0px;font-size:9px;color:#e4e4e4">R:</div>
<div class="a" style="left:727.6px;top:325.2px;width:24.8px;height:14.6px;background:#434343;border:1px solid #585858"></div>
<div class="t" style="left:729.3px;top:329.0px;font-size:9px;color:#ececec">177</div>
<svg style="left:0;top:0" width="865" height="460"><circle cx="702.2" cy="351.1" r="4.2" fill="#484848" stroke="#6a6a6a" stroke-width="0.9"/></svg>
<div class="t" style="left:710.8px;top:347.6px;font-size:9px;color:#e4e4e4">G:</div>
<div class="a" style="left:727.6px;top:343.8px;width:24.8px;height:14.6px;background:#434343;border:1px solid #585858"></div>
<div class="t" style="left:729.3px;top:347.6px;font-size:9px;color:#ececec">182</div>
<svg style="left:0;top:0" width="865" height="460"><circle cx="702.2" cy="369.0" r="4.2" fill="#484848" stroke="#6a6a6a" stroke-width="0.9"/></svg>
<div class="t" style="left:710.8px;top:365.5px;font-size:9px;color:#e4e4e4">B:</div>
<div class="a" style="left:727.6px;top:361.7px;width:24.8px;height:14.6px;background:#434343;border:1px solid #585858"></div>
<div class="t" style="left:729.3px;top:365.5px;font-size:9px;color:#ececec">194</div>
<svg style="left:0;top:0" width="865" height="460"><circle cx="781.8" cy="274.6" r="4.2" fill="#484848" stroke="#6a6a6a" stroke-width="0.9"/></svg>
<div class="t" style="left:789.4px;top:271.1px;font-size:9px;color:#e4e4e4">L:</div>
<div class="a" style="left:804px;top:267.3px;width:31px;height:14.6px;background:#434343;border:1px solid #585858"></div>
<div class="t" style="left:806px;top:271.1px;font-size:9px;color:#ececec">74</div>
<svg style="left:0;top:0" width="865" height="460"><circle cx="781.8" cy="292.9" r="4.2" fill="#484848" stroke="#6a6a6a" stroke-width="0.9"/></svg>
<div class="t" style="left:789.4px;top:289.4px;font-size:9px;color:#e4e4e4">a:</div>
<div class="a" style="left:804px;top:285.6px;width:31px;height:14.6px;background:#434343;border:1px solid #585858"></div>
<div class="t" style="left:806px;top:289.4px;font-size:9px;color:#ececec">0</div>
<svg style="left:0;top:0" width="865" height="460"><circle cx="781.8" cy="311.3" r="4.2" fill="#484848" stroke="#6a6a6a" stroke-width="0.9"/></svg>
<div class="t" style="left:789.4px;top:307.8px;font-size:9px;color:#e4e4e4">b:</div>
<div class="a" style="left:804px;top:304.0px;width:31px;height:14.6px;background:#434343;border:1px solid #585858"></div>
<div class="t" style="left:806px;top:307.8px;font-size:9px;color:#ececec">-7</div>
<div class="t" style="left:792px;top:329.0px;font-size:9px;color:#e4e4e4">C:</div>
<div class="a" style="left:804px;top:325.2px;width:25.5px;height:14.6px;background:#434343;border:1px solid #585858"></div>
<div class="t" style="left:806px;top:329.0px;font-size:9px;color:#ececec">36</div>
<div class="t" style="left:833.6px;top:329.0px;font-size:9px;color:#d4d4d4">%</div>
<div class="t" style="left:790.5px;top:347.6px;font-size:9px;color:#e4e4e4">M:</div>
<div class="a" style="left:804px;top:343.8px;width:25.5px;height:14.6px;background:#434343;border:1px solid #585858"></div>
<div class="t" style="left:806px;top:347.6px;font-size:9px;color:#ececec">26</div>
<div class="t" style="left:833.6px;top:347.6px;font-size:9px;color:#d4d4d4">%</div>
<div class="t" style="left:792px;top:365.5px;font-size:9px;color:#e4e4e4">Y:</div>
<div class="a" style="left:804px;top:361.7px;width:25.5px;height:14.6px;background:#434343;border:1px solid #585858"></div>
<div class="t" style="left:806px;top:365.5px;font-size:9px;color:#ececec">19</div>
<div class="t" style="left:833.6px;top:365.5px;font-size:9px;color:#d4d4d4">%</div>
<div class="t" style="left:792px;top:384.3px;font-size:9px;color:#e4e4e4">K:</div>
<div class="a" style="left:804px;top:380.6px;width:25.5px;height:14.6px;background:#434343;border:1px solid #585858"></div>
<div class="t" style="left:806px;top:384.3px;font-size:9px;color:#ececec">0</div>
<div class="t" style="left:833.6px;top:384.3px;font-size:9px;color:#d4d4d4">%</div>
<div class="t" style="left:700.2px;top:386.3px;font-size:8px;font-style:italic;color:#8c8c8c">#</div>
<div class="a" style="left:709.8px;top:382.8px;width:60.3px;height:14.6px;background:#464646;border:1.3px solid #2562b5;border-radius:1px"></div>
<div class="a" style="left:712.4px;top:385.4px;width:26.5px;height:9.4px;background:#0d63d6"></div>
<div class="a" style="left:739px;top:385.6px;width:0.8px;height:9px;background:#c07030"></div>
<div class="t" style="left:712.6px;top:386.3px;font-size:9px;color:#ffffff;letter-spacing:-0.4px">b1b6c2</div>
<svg style="left:0;top:0" width="865" height="460"><path d="M96.7 373.5L23 443" stroke="#d41a1a" stroke-width="1.3" fill="none"/><path d="M18.5 448.7L20.6 440.2L27.3 446.3Z" fill="#d41a1a"/></svg>
</body></html>
